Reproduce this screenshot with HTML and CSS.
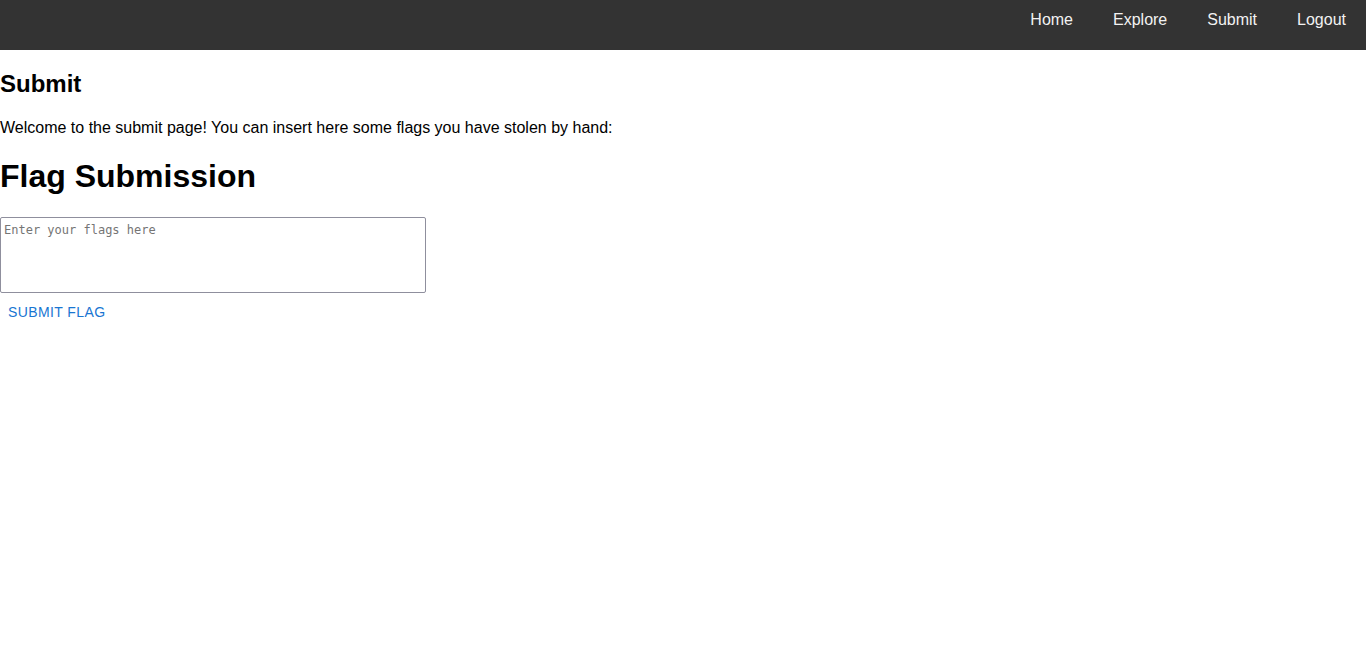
FILE: index.html
```html
<!DOCTYPE html>
<html>
<head>
<meta charset="utf-8">
<link rel="stylesheet" href="styles.css">
</head>
<body>
<nav class="topnav">
  <a href="#">Home</a>
  <a href="#">Explore</a>
  <a href="#">Submit</a>
  <a href="#">Logout</a>
</nav>
<main class="content">
  <h2 class="page-title">Submit</h2>
  <p class="intro">Welcome to the submit page! You can insert here some flags you have stolen by hand:</p>
  <h1 class="form-title">Flag Submission</h1>
  <form class="flag-form">
    <textarea class="flag-input" placeholder="Enter your flags here"></textarea>
    <div><button type="button" class="submit-btn">Submit Flag</button></div>
  </form>
</main>
</body>
</html>
```
FILE: styles.css
```css
html, body {
  margin: 0;
  padding: 0;
  background: #fff;
}
body {
  font-family: "Liberation Sans", Arial, sans-serif;
  color: #000;
}
.topnav {
  height: 50px;
  background: #333333;
  display: flex;
  justify-content: flex-end;
  align-items: flex-start;
}
.topnav a {
  color: #f2f2f2;
  text-decoration: none;
  font-size: 16px;
  line-height: 18px;
  padding: 11px 20px 9px;
}
.content {
  display: flow-root;
}
.page-title {
  font-size: 24px;
  font-weight: bold;
  margin: 20px 0 21px;
}
.intro {
  font-size: 16px;
  margin: 16px 0;
}
.form-title {
  font-size: 32px;
  font-weight: bold;
  margin: 21px 0 0;
}
.flag-form {
  margin-top: 22px;
}
.flag-input {
  display: block;
  box-sizing: border-box;
  width: 426px;
  height: 76px;
  margin: 0;
  padding: 5px 3px 2px;
  border: 1px solid #8f8f9d;
  border-radius: 2px;
  font-family: "DejaVu Sans Mono", monospace;
  font-size: 12px;
  resize: none;
}
.flag-input::placeholder {
  color: #757575;
}
.submit-btn {
  margin-top: 1px;
  background: none;
  border: 0;
  padding: 6px 8px;
  font-family: "Liberation Sans", Arial, sans-serif;
  font-size: 14px;
  font-weight: 400;
  line-height: 24.5px;
  letter-spacing: 0.4px;
  text-transform: uppercase;
  color: #1976d2;
  cursor: pointer;
  border-radius: 4px;
}
```
